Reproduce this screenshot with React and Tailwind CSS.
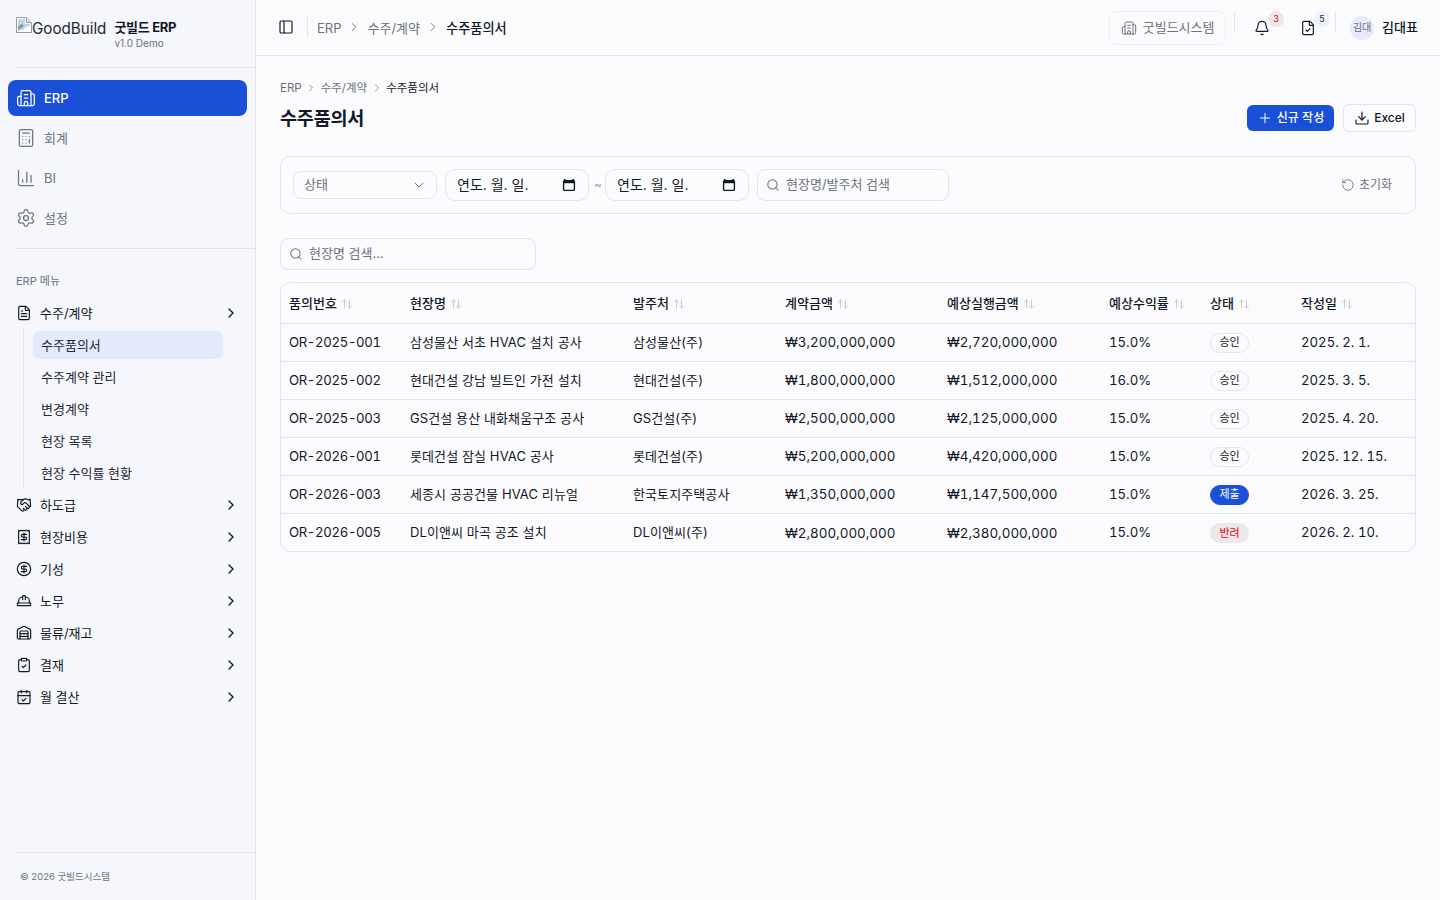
import {
  ArrowUpDown, Bell, Building2, Calculator, CalendarCheck, ChartColumn, ChevronDown, ChevronRight,
  CircleDollarSign, ClipboardCheck, Download, FileCheck, FileText, Handshake, HardHat, PanelLeft,
  Plus, Receipt, RotateCcw, Search, Settings, Warehouse,
} from 'lucide-react';

const topNav = [
  { label: 'ERP', icon: Building2, active: true },
  { label: '회계', icon: Calculator },
  { label: 'BI', icon: ChartColumn },
  { label: '설정', icon: Settings },
];

const subMenu = ['수주품의서', '수주계약 관리', '변경계약', '현장 목록', '현장 수익률 현황'];

const erpMenu = [
  { label: '하도급', icon: Handshake },
  { label: '현장비용', icon: Receipt },
  { label: '기성', icon: CircleDollarSign },
  { label: '노무', icon: HardHat },
  { label: '물류/재고', icon: Warehouse },
  { label: '결재', icon: ClipboardCheck },
  { label: '월 결산', icon: CalendarCheck },
];

const columns = [
  { label: '품의번호', width: 'w-[121px]' },
  { label: '현장명', width: 'w-[223px]' },
  { label: '발주처', width: 'w-[152px]' },
  { label: '계약금액', width: 'w-[162px]' },
  { label: '예상실행금액', width: 'w-[162px]' },
  { label: '예상수익률', width: 'w-[101px]' },
  { label: '상태', width: 'w-[91px]' },
  { label: '작성일', width: '' },
];

const rows = [
  ['OR-2025-001', '삼성물산 서초 HVAC 설치 공사', '삼성물산(주)', '₩3,200,000,000', '₩2,720,000,000', '15.0%', '승인', '2025. 2. 1.'],
  ['OR-2025-002', '현대건설 강남 빌트인 가전 설치', '현대건설(주)', '₩1,800,000,000', '₩1,512,000,000', '16.0%', '승인', '2025. 3. 5.'],
  ['OR-2025-003', 'GS건설 용산 내화채움구조 공사', 'GS건설(주)', '₩2,500,000,000', '₩2,125,000,000', '15.0%', '승인', '2025. 4. 20.'],
  ['OR-2026-001', '롯데건설 잠실 HVAC 공사', '롯데건설(주)', '₩5,200,000,000', '₩4,420,000,000', '15.0%', '승인', '2025. 12. 15.'],
  ['OR-2026-003', '세종시 공공건물 HVAC 리뉴얼', '한국토지주택공사', '₩1,350,000,000', '₩1,147,500,000', '15.0%', '제출', '2026. 3. 25.'],
  ['OR-2026-005', 'DL이앤씨 마곡 공조 설치', 'DL이앤씨(주)', '₩2,800,000,000', '₩2,380,000,000', '15.0%', '반려', '2026. 2. 10.'],
];

// per-column text style, the number columns run a little wider than the hangul ones
const cellClass = [
  'text-[13.2px] tabular-nums tracking-[-0.35px]',
  'tracking-[0.1px]',
  'tracking-[0.1px]',
  'text-[13.4px] tabular-nums',
  'text-[13.4px] tabular-nums',
  'text-[13.2px] tabular-nums',
  '',
  'text-[13.2px] tabular-nums',
];

const badgeClass = {
  승인: 'border-[#e2e5f1] bg-[#fbfbfd] text-[#111827]',
  제출: 'border-[#1a4fd8] bg-[#1a4fd8] text-white',
  반려: 'border-[#ece8ea] bg-[#ece8ea] text-[#e7000b]',
};

function BrokenImage() {
  return (
    <svg width="16" height="16" viewBox="0 0 16 16" className="-mt-[3px] shrink-0 self-start">
      <path d="M0.5 0.5h10l5 5v10h-15z" fill="#fff" stroke="#9a9a9a" />
      <path d="M10.5 0.5v5h5" fill="#e4e4e4" stroke="#9a9a9a" />
      <path d="M2 2h7v5h5v2l-4 1-3 3-5 1z" fill="#c3d3ee" />
      <path d="M2 10l3-3 3 2-6 4z" fill="#7ea26f" />
    </svg>
  );
}

function DateField() {
  return (
    <div className="flex h-8 w-36 items-center justify-between rounded-[10px] border border-[#e2e5f1] bg-[#fbfbfd] pl-[11px] pr-3 text-sm text-[#111827]">
      <span>연도. 월. 일.</span>
      <svg width="14" height="14" viewBox="0 0 14 14" fill="none">
        <path d="M3 1v2M11 1v2" stroke="#111827" strokeWidth="1.6" />
        <rect x="1.6" y="2.6" width="10.8" height="9.8" rx="1" stroke="#111827" strokeWidth="1.4" />
        <rect x="1.6" y="2.6" width="10.8" height="2.6" fill="#111827" />
      </svg>
    </div>
  );
}

export default function App() {
  return (
    <div className="flex min-h-screen bg-[#fbfbfd] font-['Inter','Noto_Sans_CJK_KR',sans-serif] text-[#111827]">
      <aside className="flex w-[256px] shrink-0 flex-col border-r border-[#e2e5f1] bg-[#f6f7fc]">
        <div className="ml-4 flex h-[68px] items-center gap-2 border-b border-[#e2e5f1]">
          <div className="mb-[9px] flex items-end text-[15.2px] leading-[18px] text-[#1f2937]">
            <BrokenImage />
            <span>GoodBuild</span>
          </div>
          <div>
            <div className="text-[13px] font-bold leading-[18px] tracking-[-0.3px] text-[#111827]">굿빌드 ERP</div>
            <div className="text-[10px] leading-[14px] text-[#6b7280]">v1.0 Demo</div>
          </div>
        </div>

        <nav className="flex flex-col gap-1 px-2 pt-3">
          {topNav.map(({ label, icon: Icon, active }) => (
            <div
              key={label}
              className={
                active
                  ? 'flex h-9 items-center gap-2 rounded-lg bg-[#1a4fd8] px-2 text-[13px] font-medium text-white'
                  : 'flex h-9 items-center gap-2 rounded-lg px-2 text-[13px] text-[#6b7280]'
              }
            >
              <Icon className="h-5 w-5 shrink-0" strokeWidth={1.5} />
              <span className="pt-px">{label}</span>
            </div>
          ))}
        </nav>

        <div className="ml-4 mt-3 border-t border-[#e2e5f1]" />

        <div className="px-4 pt-6 text-[11px] leading-4 text-[#6b7280]">ERP 메뉴</div>

        <div className="mt-2 flex flex-col">
          <div className="flex h-8 items-center gap-2 pl-4 pr-4 text-[13px]">
            <FileText className="h-4 w-4 shrink-0" strokeWidth={1.75} />
            <span className="flex-1 pt-0.5">수주/계약</span>
            <ChevronRight className="h-4 w-4" />
          </div>
          <div className="ml-[23px] mr-8 flex flex-col border-l border-[#e2e5f1] py-0">
            {subMenu.map((label, i) => (
              <div
                key={label}
                className={
                  i === 0
                    ? 'my-0.5 ml-[9px] flex h-7 items-center rounded-md bg-[#e3eafc] px-2 pt-0.5 text-[13px] text-[#1f2937]'
                    : 'my-0.5 ml-[9px] flex h-7 items-center rounded-md px-2 pt-0.5 text-[13px] text-[#1f2937]'
                }
              >
                {label}
              </div>
            ))}
          </div>
          {erpMenu.map(({ label, icon: Icon }) => (
            <div key={label} className="flex h-8 items-center gap-2 pl-4 pr-4 text-[13px]">
              <Icon className="h-4 w-4 shrink-0" strokeWidth={1.75} />
              <span className="flex-1 pt-0.5">{label}</span>
              <ChevronRight className="h-4 w-4" />
            </div>
          ))}
        </div>

        <div className="ml-4 mt-auto flex h-12 items-center border-t border-[#e2e5f1] pl-1 pt-0.5 text-[9.5px] text-[#6b7280]">
          © 2026 굿빌드시스템
        </div>
      </aside>

      <div className="flex min-w-0 flex-1 flex-col">
        <header className="flex h-14 items-center justify-between border-b border-[#e2e5f1] pl-[22px] pr-[22px]">
          <div className="flex items-center">
            <PanelLeft className="h-4 w-4" strokeWidth={1.75} />
            <div className="ml-[13px] h-5 w-px bg-[#e2e5f1]" />
            <div className="ml-[9px] flex items-center gap-1.5 pt-0.5 text-[13px] text-[#6b7280]">
              <span>ERP</span>
              <ChevronRight className="h-3.5 w-3.5 -translate-y-px" strokeWidth={1.5} />
              <span>수주/계약</span>
              <ChevronRight className="h-3.5 w-3.5 -translate-y-px" strokeWidth={1.5} />
              <span className="text-[13.2px] font-medium text-[#111827]">수주품의서</span>
            </div>
          </div>
          <div className="flex items-center">
            <div className="flex h-[34px] w-[117px] items-center justify-center gap-1.5 rounded-lg border border-[#eceef6] text-[13px] text-[#6b7280]">
              <Building2 className="h-4 w-4" strokeWidth={1.5} />
              <span>굿빌드시스템</span>
            </div>
            <div className="ml-2 mb-3 h-5 w-px bg-[#e2e5f1]" />
            <div className="relative ml-[19px] flex h-8 w-4 items-center justify-center">
              <Bell className="h-4 w-4" strokeWidth={1.75} />
              <span className="absolute -right-[14px] top-[-1px] flex h-4 w-4 items-center justify-center rounded-full bg-[#ece8ea] text-[9px] text-[#e7000b]">3</span>
            </div>
            <div className="relative ml-[30px] flex h-8 w-4 items-center justify-center">
              <FileCheck className="h-4 w-4" strokeWidth={1.75} />
              <span className="absolute -right-[14px] top-[-1px] flex h-4 w-4 items-center justify-center rounded-full bg-[#eef1fb] text-[9px] text-[#1f2937]">5</span>
            </div>
            <div className="ml-[19px] mb-3 h-5 w-px bg-[#e2e5f1]" />
            <div className="ml-[14px] flex h-6 w-6 items-center justify-center rounded-full bg-[#e6eafa] text-[10px] text-[#6b7280]">김대</div>
            <span className="ml-2 text-[13px] font-medium">김대표</span>
          </div>
        </header>

        <main className="flex flex-col px-6 pt-6">
          <div className="flex h-4 items-center gap-[3.5px] pt-0.5 text-[11.5px] text-[#6b7280]">
            <span>ERP</span>
            <ChevronRight className="h-3 w-3 -translate-y-px" strokeWidth={1.5} />
            <span>수주/계약</span>
            <ChevronRight className="h-3 w-3 -translate-y-px" strokeWidth={1.5} />
            <span className="text-[#111827]">수주품의서</span>
          </div>

          <div className="mt-2 flex h-7 items-center justify-between">
            <h1 className="pt-0.5 text-[18.5px] font-semibold tracking-[-0.2px]">수주품의서</h1>
            <div className="flex items-center gap-[9px]">
              <button className="flex h-[26px] w-[87px] items-center justify-center gap-1 rounded-md bg-[#1a4fd8] text-xs font-medium text-white">
                <Plus className="h-4 w-4" strokeWidth={1.5} />
                신규 작성
              </button>
              <button className="flex h-7 w-[73px] items-center justify-center gap-1 rounded-md border border-[#e2e5f1] bg-[#fbfbfd] text-xs font-medium">
                <Download className="h-4 w-4" strokeWidth={1.75} />
                Excel
              </button>
            </div>
          </div>

          <div className="mt-6 flex h-[58px] items-center rounded-[10px] border border-[#e2e5f1] pl-3 pr-[23px]">
            <div className="flex h-7 w-36 items-center justify-between rounded-lg border border-[#e2e5f1] pl-2.5 pr-[9px] text-[13px] text-[#6b7280]">
              <span>상태</span>
              <ChevronDown className="h-4 w-4" strokeWidth={1.5} />
            </div>
            <div className="ml-2">
              <DateField />
            </div>
            <span className="mx-[5px] w-1.5 text-center text-xs text-[#9ca3af]">~</span>
            <DateField />
            <div className="ml-2 flex h-8 w-48 items-center gap-1.5 rounded-lg border border-[#e2e5f1] pl-2 text-[13px] text-[#6b7280]">
              <Search className="h-3.5 w-3.5 shrink-0" strokeWidth={1.75} />
              <span>현장명/발주처 검색</span>
            </div>
            <div className="ml-auto flex items-center gap-1 text-xs text-[#6b7280]">
              <RotateCcw className="h-3.5 w-3.5" strokeWidth={1.5} />
              초기화
            </div>
          </div>

          <div className="mt-6 flex h-8 w-64 items-center gap-1.5 rounded-lg border border-[#e2e5f1] pl-2 text-[13px] text-[#6b7280]">
            <Search className="h-3.5 w-3.5 shrink-0" strokeWidth={1.75} />
            <span>현장명 검색...</span>
          </div>

          <div className="mt-3 overflow-hidden rounded-[10px] border border-[#e2e5f1]">
            <table className="w-full table-fixed border-collapse text-left text-[13px]">
              <thead>
                <tr className="h-10 border-b border-[#e2e5f1]">
                  {columns.map((col) => (
                    <th key={col.label} className={`${col.width} px-2 pt-0.5 text-[13px] font-medium`}>
                      <span className="flex items-center gap-1">
                        {col.label}
                        <ArrowUpDown className="h-3 w-3 text-[#b6bac4]" strokeWidth={1.5} />
                      </span>
                    </th>
                  ))}
                </tr>
              </thead>
              <tbody>
                {rows.map((row, r) => (
                  <tr key={row[0]} className={r < rows.length - 1 ? 'h-[38px] border-b border-[#e2e5f1]' : 'h-[38px]'}>
                    {row.map((cell, c) => (
                      <td key={c} className={`overflow-hidden whitespace-nowrap px-2 pt-px ${cellClass[c]}`}>
                        {c === 6 ? (
                          <span className={`inline-flex h-5 w-[39px] items-center justify-center rounded-full border text-[11px] ${badgeClass[cell]}`}>
                            {cell}
                          </span>
                        ) : (
                          cell
                        )}
                      </td>
                    ))}
                  </tr>
                ))}
              </tbody>
            </table>
          </div>
        </main>
      </div>
    </div>
  );
}
